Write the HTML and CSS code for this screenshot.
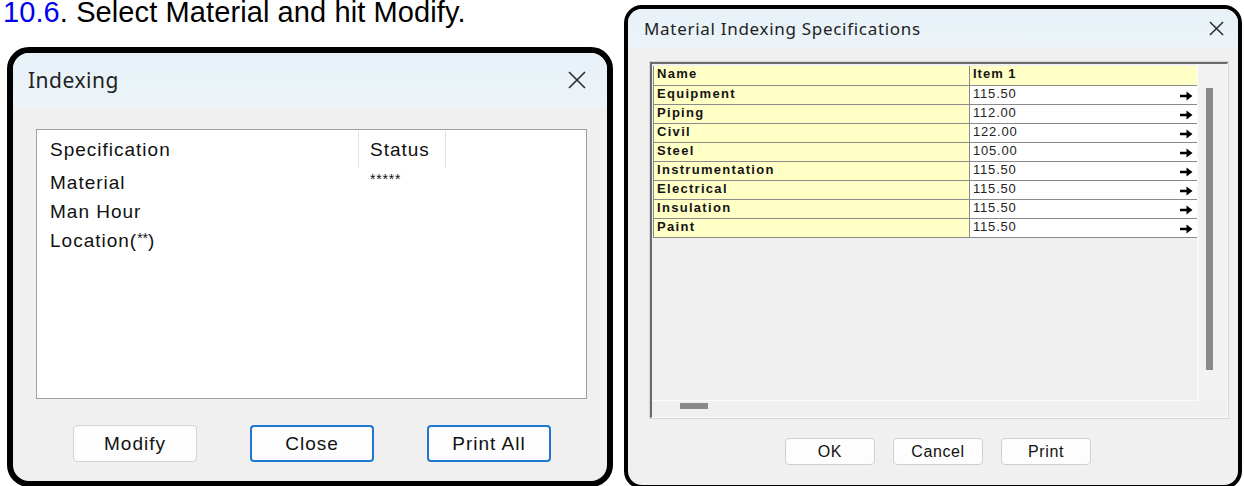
FILE: index.html
```html
<!DOCTYPE html>
<html lang="en">
<head>
<meta charset="utf-8">
<title>Indexing</title>
<link rel="stylesheet" href="styles.css">
</head>
<body>
<div class="page">
  <section class="left-col">
    <p class="step"><span class="step-num">10.6</span>. Select Material and hit Modify.</p>

    <div class="dialog dialog-index">
      <header class="titlebar titlebar-lg">
        <span class="title">Indexing</span>
        <svg class="close close-lg" viewBox="0 0 18 18" aria-hidden="true"><path d="M1 1 L17 17 M17 1 L1 17"/></svg>
      </header>
      <div class="dialog-body index-body">
        <div class="listbox">
          <div class="list-head">
            <span class="col col-spec">Specification</span>
            <span class="col col-status">Status</span>
          </div>
          <div class="list-row"><span class="col col-spec">Material</span><span class="col col-status">*****</span></div>
          <div class="list-row"><span class="col col-spec">Man Hour</span><span class="col col-status"></span></div>
          <div class="list-row"><span class="col col-spec">Location(<span class="mark">**</span>)</span><span class="col col-status"></span></div>
        </div>
        <div class="btn-row btn-row-lg">
          <button class="btn btn-lg">Modify</button>
          <button class="btn btn-lg btn-focus">Close</button>
          <button class="btn btn-lg btn-focus">Print All</button>
        </div>
      </div>
    </div>
  </section>

  <section class="right-col">
    <div class="dialog dialog-spec">
      <header class="titlebar titlebar-sm">
        <span class="title title-sm">Material Indexing Specifications</span>
        <svg class="close close-sm" viewBox="0 0 16 16" aria-hidden="true"><path d="M1 1 L15 15 M15 1 L1 15"/></svg>
      </header>
      <div class="dialog-body spec-body">
        <div class="grid-frame">
          <div class="grid-data">
            <table class="spec-table">
              <thead>
                <tr><th class="c-name">Name</th><th class="c-val">Item 1</th></tr>
              </thead>
              <tbody>
                <tr><td class="c-name">Equipment</td><td class="c-val"><span>115.50</span><svg class="arrow" viewBox="0 0 13 10"><path d="M0 5 H8"/><polygon points="6.5,0.5 12.5,5 6.5,9.5"/></svg></td></tr>
                <tr><td class="c-name">Piping</td><td class="c-val"><span>112.00</span><svg class="arrow" viewBox="0 0 13 10"><path d="M0 5 H8"/><polygon points="6.5,0.5 12.5,5 6.5,9.5"/></svg></td></tr>
                <tr><td class="c-name">Civil</td><td class="c-val"><span>122.00</span><svg class="arrow" viewBox="0 0 13 10"><path d="M0 5 H8"/><polygon points="6.5,0.5 12.5,5 6.5,9.5"/></svg></td></tr>
                <tr><td class="c-name">Steel</td><td class="c-val"><span>105.00</span><svg class="arrow" viewBox="0 0 13 10"><path d="M0 5 H8"/><polygon points="6.5,0.5 12.5,5 6.5,9.5"/></svg></td></tr>
                <tr><td class="c-name">Instrumentation</td><td class="c-val"><span>115.50</span><svg class="arrow" viewBox="0 0 13 10"><path d="M0 5 H8"/><polygon points="6.5,0.5 12.5,5 6.5,9.5"/></svg></td></tr>
                <tr><td class="c-name">Electrical</td><td class="c-val"><span>115.50</span><svg class="arrow" viewBox="0 0 13 10"><path d="M0 5 H8"/><polygon points="6.5,0.5 12.5,5 6.5,9.5"/></svg></td></tr>
                <tr><td class="c-name">Insulation</td><td class="c-val"><span>115.50</span><svg class="arrow" viewBox="0 0 13 10"><path d="M0 5 H8"/><polygon points="6.5,0.5 12.5,5 6.5,9.5"/></svg></td></tr>
                <tr><td class="c-name">Paint</td><td class="c-val"><span>115.50</span><svg class="arrow" viewBox="0 0 13 10"><path d="M0 5 H8"/><polygon points="6.5,0.5 12.5,5 6.5,9.5"/></svg></td></tr>
              </tbody>
            </table>
          </div>
          <div class="vscroll"><div class="vthumb"></div></div>
          <div class="hscroll"><div class="hthumb"></div></div>
          <div class="corner"></div>
        </div>
        <div class="btn-row btn-row-sm">
          <button class="btn btn-sm">OK</button>
          <button class="btn btn-sm">Cancel</button>
          <button class="btn btn-sm">Print</button>
        </div>
      </div>
    </div>
  </section>
</div>
</body>
</html>
```

FILE: styles.css
```css
* { box-sizing: border-box; }

html, body {
  margin: 0;
  padding: 0;
  background: #ffffff;
}

.page {
  display: flex;
  width: 1244px;
  height: 486px;
  overflow: hidden;
  font-family: "Liberation Sans", Arial, sans-serif;
  color: #111;
}

/* ---------- left column: instruction + Indexing dialog ---------- */
.left-col {
  width: 616px;
  flex: none;
}

.step {
  margin: -2px 0 0 3px;
  font-size: 29px;
  line-height: 29px;
  letter-spacing: 0.1px;
  color: #000;
  white-space: nowrap;
}
.step-num { color: #0000ee; }

.dialog {
  background: #f0f0f0;
  border: 6px solid #000;
  overflow: hidden;
  display: flex;
  flex-direction: column;
}

.dialog-index {
  margin: 20px 0 0 7px;
  width: 606px;
  height: 440px;
  border-radius: 22px;
}

.titlebar {
  display: flex;
  align-items: center;
  justify-content: space-between;
  background: linear-gradient(#e7f1f7, #ecf4f9);
  flex: none;
}
.titlebar-lg {
  height: 54px;
  padding: 0 21px 0 15px;
}
.title {
  font-family: "Noto Sans", "Open Sans", sans-serif;
  font-size: 21px;
  letter-spacing: 0.5px;
  color: #222;
}

.close path {
  fill: none;
  stroke: #2a2a2a;
  stroke-width: 1.6;
}
.close-lg { width: 18px; height: 18px; }
.close-sm { width: 15px; height: 15px; }

.index-body {
  padding: 22px 20px 0 23px;
}

.listbox {
  height: 270px;
  background: #fff;
  border: 1px solid #9aa0a8;
  font-size: 19px;
  letter-spacing: 1px;
  color: #111;
}

.list-head {
  display: flex;
  height: 38px;
  align-items: center;
}
.list-head .col {
  align-self: stretch;
  display: flex;
  align-items: center;
  margin: 1px 0 0;
}
.list-head .col-spec { border-right: 1px solid #e3e3e3; }
.list-head .col-status { border-right: 1px solid #e3e3e3; }

.list-row {
  display: flex;
  height: 29px;
  align-items: center;
}

.col-spec {
  width: 322px;
  padding-left: 13px;
}
.col-status {
  width: 87px;
  padding-left: 11px;
}
.list-row .col-status {
  font-size: 14px;
  letter-spacing: 0.8px;
  align-self: flex-start;
  padding-top: 3px;
  padding-left: 11px;
}
.mark {
  font-size: 14px;
  letter-spacing: 0;
  vertical-align: 4px;
}

.btn-row {
  display: flex;
}
.btn-row-lg {
  margin-top: 26px;
  padding-left: 37px;
  gap: 53px;
}

.btn {
  font-family: "Liberation Sans", Arial, sans-serif;
  color: #111;
  background: #fdfdfd;
  border: 1px solid #d2d2d2;
  border-radius: 4px;
  padding: 0;
}
.btn-lg {
  width: 124px;
  height: 37px;
  font-size: 19px;
  letter-spacing: 1px;
}
.btn-focus {
  border: 2px solid #1f78cf;
}

/* ---------- right column: Material Indexing Specifications ---------- */
.right-col {
  margin-left: 8px;
  padding-top: 5px;
}

.dialog-spec {
  width: 618px;
  height: 484px;
  border-width: 4px;
  border-radius: 18px;
}

.titlebar-sm {
  height: 39px;
  padding: 0 14px 0 16px;
}
.title-sm {
  font-size: 17px;
  letter-spacing: 0.7px;
  color: #222;
}

.spec-body {
  padding: 14px 10px 0 22px;
}

.grid-frame {
  height: 356px;
  display: grid;
  grid-template-columns: 1fr 29px;
  grid-template-rows: 1fr 16px;
  border-top: 2px solid #6a6a6a;
  border-left: 2px solid #6a6a6a;
  border-right: 1px solid #fafafa;
  border-bottom: 1px solid #fafafa;
  box-shadow: 0 0 0 1px #d6d6d6;
  background: #f0f0f0;
}

.grid-data {
  border-right: 1px solid #fbfbfb;
  border-bottom: 1px solid #fbfbfb;
  padding: 2px 0 0 1px;
  overflow: hidden;
}

.spec-table {
  border-collapse: collapse;
  table-layout: fixed;
  width: 544px;
  font-size: 13px;
  line-height: 15px;
}
.spec-table th,
.spec-table td {
  height: 19px;
  padding: 0 0 0 3px;
  vertical-align: top;
  text-align: left;
  border-bottom: 1px solid #8a8a8a;
  white-space: nowrap;
}
.spec-table .c-name {
  width: 316px;
  background: #ffffc6;
  font-weight: bold;
  letter-spacing: 1.3px;
  border-left: 1px solid #8a8a8a;
  border-right: 1px solid #8a8a8a;
  color: #141414;
}
.spec-table th.c-val {
  background: #ffffc6;
  font-weight: bold;
  letter-spacing: 1px;
  color: #141414;
}
.spec-table td.c-val {
  background: #fff;
  letter-spacing: 0.8px;
  color: #222;
  position: relative;
}

.arrow {
  position: absolute;
  right: 4px;
  top: 5px;
  width: 13px;
  height: 10px;
}
.arrow path {
  stroke: #000;
  stroke-width: 2.6;
  fill: none;
}
.arrow polygon { fill: #000; }

.vscroll {
  background: #f2f2f2;
  padding: 24px 0 0 8px;
}
.vthumb {
  width: 7px;
  height: 282px;
  background: #8a8a8a;
}

.hscroll {
  background: #f0f0f0;
  padding: 2px 0 0 28px;
}
.hthumb {
  width: 28px;
  height: 6px;
  background: #8a8a8a;
}
.corner { background: #f0f0f0; }

.btn-row-sm {
  margin-top: 20px;
  padding-left: 135px;
  gap: 18px;
}
.btn-sm {
  width: 90px;
  height: 27px;
  font-size: 16px;
  letter-spacing: 0.6px;
  border-color: #cfcfcf;
}
```
